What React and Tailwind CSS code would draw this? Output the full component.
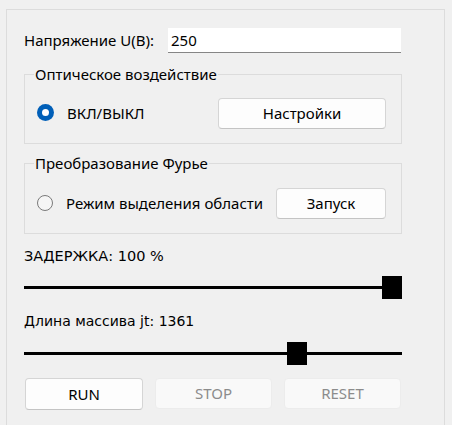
import React from 'react';

const ui = { fontFamily: '"Noto Sans", "Open Sans", sans-serif' };
const tahoma = { fontFamily: '"DejaVu Sans", "Liberation Sans", sans-serif' };

function Radio({ checked }) {
    if (checked) {
        return (
            <span className="w-[17px] h-[17px] rounded-full bg-[#005fb8] flex items-center justify-center shrink-0">
                <span className="block w-[7px] h-[7px] rounded-full bg-white" />
            </span>
        );
    }
    return <span className="block w-[16px] h-[16px] rounded-full border border-[#7a7a7a] bg-[#f5f5f5] shrink-0" />;
}

function Group({ title, children, className }) {
    return (
        <div className={`relative border border-[#dcdcdc] ${className}`}>
            <span className="absolute left-[9px] -top-[11px] px-[1px] bg-[#f0f0f0] text-[15px] leading-[20px] text-black">
                {title}
            </span>
            {children}
        </div>
    );
}

function Slider({ thumbLeft }) {
    return (
        <div className="relative h-[23px] w-[378px]">
            <div className="absolute left-0 right-0 top-[10px] h-[3px] bg-black" />
            <div className={`absolute top-0 w-[20px] h-[23px] bg-black ${thumbLeft}`} />
        </div>
    );
}

export default function App() {
    return (
        <div className="w-[452px] h-[425px] bg-[#f0f0f0] overflow-hidden pt-[9px] pl-[6px]" style={ui}>
            <div className="w-[439px] h-[430px] border border-[#dcdcdc] pl-[17px] pt-[18px]">
                {/* Voltage */}
                <div className="flex items-center h-[25px]">
                    <span className="w-[144px] text-[15px] text-black">Напряжение U(B):</span>
                    <div className="w-[233px] h-[25px] bg-white border-b border-[#868686] flex items-center pl-[3px] text-[15px] text-black">
                        250
                    </div>
                </div>

                {/* Optical */}
                <Group title="Оптическое воздействие" className="mt-[21px] w-[378px] h-[70px] pt-[23px]">
                    <div className="flex items-center h-[31px]">
                        <div className="ml-[12px] mt-[-2px]"><Radio checked /></div>
                        <span className="ml-[13px] text-[15px] text-black">ВКЛ/ВЫКЛ</span>
                        <button className="ml-auto mr-[15px] w-[168px] h-[31px] bg-[#fdfdfd] border border-[#d5d5d5] border-b-[#c4c4c4] rounded-[4px] text-[15px] text-black">
                            Настройки
                        </button>
                    </div>
                </Group>

                {/* Fourier */}
                <Group title="Преобразование Фурье" className="mt-[19px] w-[378px] h-[71px] pt-[24px]">
                    <div className="flex items-center h-[31px]">
                        <div className="ml-[12px] mt-[-2px]"><Radio /></div>
                        <span className="ml-[13px] text-[15px] text-black">Режим выделения области</span>
                        <button className="ml-auto mr-[15px] w-[110px] h-[31px] bg-[#fdfdfd] border border-[#d5d5d5] border-b-[#c4c4c4] rounded-[4px] text-[15px] text-black">
                            Запуск
                        </button>
                    </div>
                </Group>

                {/* Delay */}
                <div className="mt-[12px] h-[20px] leading-[20px] text-[14.5px] text-black" style={tahoma}>ЗАДЕРЖКА: 100 %</div>
                <div className="mt-[10px]"><Slider thumbLeft="left-[358px]" /></div>

                <div className="mt-[12px] h-[20px] leading-[20px] text-[14px] text-black" style={tahoma}>Длина массива jt: 1361</div>
                <div className="mt-[11px]"><Slider thumbLeft="left-[263px]" /></div>

                {/* Buttons */}
                <div className="mt-[13px] flex gap-[12px] pl-[1px]">
                    <button className="w-[118px] h-[32px] bg-[#fdfdfd] border border-[#d5d5d5] border-b-[#c4c4c4] rounded-[4px] text-[15px] text-black">
                        RUN
                    </button>
                    <button className="w-[117px] h-[31px] bg-[#f9f9f9] border border-[#ececec] rounded-[4px] text-[15px] text-[#8c8c8c]">
                        STOP
                    </button>
                    <button className="w-[117px] h-[31px] bg-[#f9f9f9] border border-[#ececec] rounded-[4px] text-[15px] text-[#8c8c8c]">
                        RESET
                    </button>
                </div>
            </div>
        </div>
    );
}
